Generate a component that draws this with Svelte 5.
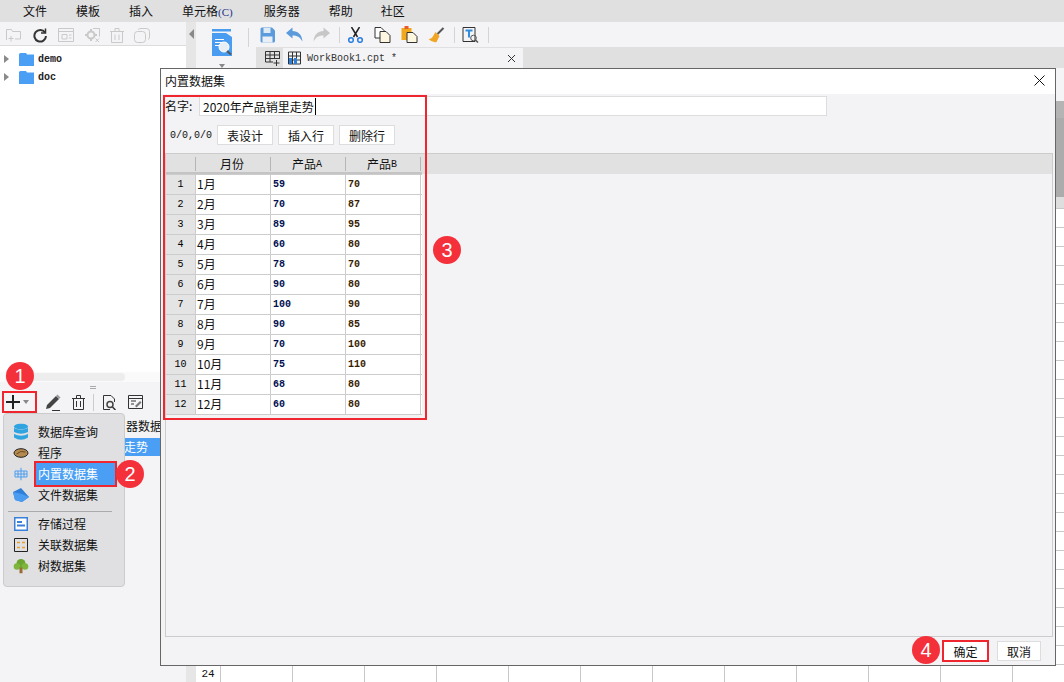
<script>
  const menus = [['文件', 23], ['模板', 29], ['插入', 29], ['单元格', 29], ['服务器', 31], ['帮助', 29], ['社区', 28]];
  const rows = [
    ['1月', 59, 70], ['2月', 70, 87], ['3月', 89, 95], ['4月', 60, 80], ['5月', 78, 70], ['6月', 90, 80],
    ['7月', 100, 90], ['8月', 90, 85], ['9月', 70, 100], ['10月', 75, 110], ['11月', 68, 80], ['12月', 60, 80]
  ];
</script>

<div class="app">
  <header class="menubar">
    {#each menus as m}
      <span style="margin-left:{m[1]}px">{m[0]}{#if m[0] === '单元格'}<small class="c">(C)</small>{/if}</span>
    {/each}
  </header>

  <div class="main">
    <aside class="left">
      <div class="ltools">
        <svg width="16" height="14" viewBox="0 0 16 14" fill="none" stroke="#c9c9c9"><path d="M.5 12V1.500h5l1 2h8V11H9M2.500 10.500h5M5 8v5.500" /></svg>
        <svg width="16" height="16" viewBox="0 0 16 16" fill="none" stroke="#333" stroke-width="2"><path d="M13 5.500A5.800 5.800 0 1 0 14 9" /><path d="M13.500 1.500v4.500H9" stroke-width="1.500" /></svg>
        <svg width="16" height="14" viewBox="0 0 16 14" fill="none" stroke="#c9c9c9"><path d="M.5.500h15v13H.5zM.5 3.500h15M4 6.500h5v4.500H4zM11 7h2.500M11 10h2.500" /></svg>
        <svg width="16" height="15" viewBox="0 0 16 15" fill="none" stroke="#c9c9c9"><path d="M7 1v3M7 10v3M1 7h3M10 7h3" stroke-width="2" /><circle cx="7" cy="7" r="3.500" stroke-width="2" /><path d="M11.500 10.500l3.500 3.500M15 10.500L11.500 14" /><path d="M9 .5h6.500v8" /></svg>
        <svg width="14" height="15" viewBox="0 0 14 15" fill="none" stroke="#c9c9c9"><path d="M0 3.500h14M5 3.500V.5h4v3M1.500 3.500v11h11v-11M5 6.500v5.500M9 6.500v5.500" /></svg>
        <svg width="16" height="15" viewBox="0 0 16 15" fill="none" stroke="#c9c9c9"><rect x=".5" y="3.500" width="11" height="11" rx="3" /><path d="M4 1.500Q5 .5 7 .5h5.500Q15.500 .5 15.500 3.500V9Q15.500 11 14 11.500" /></svg>
      </div>
      <div class="tree">
        <div class="node">
          <i class="tri"></i>
          <svg class="folder" width="15" height="13" viewBox="0 0 15 13"><path d="M0 1.500Q0 0 1.500 0H7L8 1.500H15V13H0Z" fill="#4a9ff5" /></svg>
          <span>demo</span>
        </div>
        <div class="node">
          <i class="tri"></i>
          <svg class="folder" width="15" height="13" viewBox="0 0 15 13"><path d="M0 1.500Q0 0 1.500 0H7L8 1.500H15V13H0Z" fill="#4a9ff5" /></svg>
          <span>doc</span>
        </div>
        <div class="hscroll"><b></b></div>
      </div>
      <div class="grip"><i></i></div>
      <div class="ltools2">
        <svg class="plus" width="14" height="14" viewBox="0 0 14 14"><path d="M7 0v14M0 7h14" stroke="#222" stroke-width="2" /></svg>
        <i class="caret"></i>
        <svg class="pen" width="15" height="17" viewBox="0 0 15 17"><path d="M1 11L10 2l3 3-9 9-4 1z" fill="#444" /><path d="M10 2l1.500-1.500 3 3L13 5z" fill="#999" /><path d="M6 16.500h8" stroke="#333" /></svg>
        <svg width="13" height="15" viewBox="0 0 13 15" fill="none" stroke="#333"><path d="M0 3.500h13M4.500 3.500V.5h4v3M1.500 3.500v11h10v-11M4.500 6v6M8.500 6v6" /></svg>
        <u></u>
        <svg width="13" height="15" viewBox="0 0 13 15" fill="none" stroke="#333"><path d="M7 14.500H.5V.5H8L11.500 4v3" /><circle cx="7" cy="9.500" r="3" stroke="#444" stroke-width="1.500" /><path d="M9.500 12L12.500 15" stroke-width="1.500" /></svg>
        <svg class="lastic" width="15" height="14" viewBox="0 0 15 14" fill="none" stroke="#333"><path d="M.5.500h14v13H.5zM.5 3.500h14M3 6h5M3 9h3" /><path d="M7 11l5-5 1.500 1.500-5 5z" fill="#777" stroke="none" /></svg>
      </div>
      <div class="dslist">
        <div class="ds first">器数据</div>
        <div class="ds sel">走势</div>
      </div>
    </aside>

    <div class="split"><i></i></div>

    <section class="work">
      <div class="wtop">
        <div class="tpl">
          <svg width="22" height="29" viewBox="0 0 22 29">
            <path d="M1 0h19v2.500H1z" fill="#4a9cf0" />
            <path d="M1 4h14l6 4v19H1z" fill="#4a9cf0" />
            <path d="M4 10.500h9M4 13.500h7M4 16.500h5" stroke="#fff" />
            <circle cx="13" cy="18" r="5" fill="#e8eef4" stroke="#fff" />
            <path d="M16 22l4 3.500" stroke="#555" stroke-width="2" />
          </svg>
          <i class="caret"></i>
        </div>
        <u class="sepv"></u>
        <div class="workcol">
          <div class="tb">
            <svg width="17" height="16" viewBox="0 0 16 16"><path d="M1 2q0-1.500 1.500-1.500h10L15.500 3.500V14q0 1.500-1.500 1.500H2.500Q1 15.500 1 14z" fill="#5b9bdb" /><path d="M4 1h7v5H4z" fill="#dfeaf5" /><path d="M3 9.500h10v6H3z" fill="#e8eff7" /></svg>
            <svg width="17" height="15" viewBox="0 0 17 14"><path d="M0 5.500L6.500 0v3.500C12 3.500 16 7 16.500 14 14 9.500 11 8 6.500 8v3z" fill="#5b9bdb" /></svg>
            <svg width="17" height="15" viewBox="0 0 17 14"><path d="M17 5.500L10.500 0v3.500C5 3.500 1 7 .5 14 3 9.500 6 8 10.500 8v3z" fill="#c7c7c7" /></svg>
            <u></u>
            <svg width="17" height="16" viewBox="0 0 16 16" fill="none"><path d="M4 0l6 10M12 0L6 10" stroke="#222" stroke-width="1.500" /><circle cx="3.500" cy="13" r="2.300" stroke="#2f7fe0" stroke-width="1.600" /><circle cx="12.500" cy="13" r="2.300" stroke="#2f7fe0" stroke-width="1.600" /></svg>
            <svg width="17" height="16" viewBox="0 0 16 16" fill="#fff" stroke="#333"><path d="M.5.500h6l3 3V11H.5z" /><path d="M5.500 4.500h6l4 4v7h-10z" fill="#fdf6e0" /></svg>
            <svg width="17" height="17" viewBox="0 0 16 17"><path d="M0 2h10v12H0z" fill="#f2a81d" /><path d="M3 0h4v3H3z" fill="#e85b2a" /><path d="M5.500 6.500h6l4 4v6h-10z" fill="#fdf6e0" stroke="#333" /></svg>
            <svg width="17" height="16" viewBox="0 0 16 16"><path d="M15 1L9 7" stroke="#555" stroke-width="2" /><path d="M7 5l4 4-3 6q-4 1-8-3q3 0 4-2z" fill="#f0a524" /></svg>
            <u></u>
            <svg width="17" height="16" viewBox="0 0 16 16" fill="none"><path d="M.5.500h12v14H.5z" stroke="#333" /><path d="M3 3.500h7M6.500 3.500v7" stroke="#2f8de0" stroke-width="2" /><circle cx="11" cy="11" r="2.800" stroke="#555" /><path d="M13 13l2.500 2.500" stroke="#555" stroke-width="1.500" /></svg>
            <u></u>
          </div>
          <div class="tabbar">
            <svg class="addsheet" width="15" height="15" viewBox="0 0 15 15" fill="none" stroke="#333"><path d="M.5 11V.5h14V8M.5 4h14M.5 7.500h14M5 .5V11M9.500.5V8M.5 11H8M11.500 9v6M8.500 12h6" /></svg>
            <div class="tab">
              <svg width="13" height="14" viewBox="0 0 13 14"><path d="M.5 1h12v12H.5zM.5 5h12M.5 9h12M4.500 1v12M8.500 1v12" fill="none" stroke="#333" /><path d="M1 7h3v6H1zM6 7h3v6H6z" fill="#2f7fd8" /></svg>
              <span>WorkBook1.cpt *</span>
              <svg class="x" width="9" height="9" viewBox="0 0 9 9"><path d="M1 1l7 7M8 1L1 8" stroke="#333" /></svg>
            </div>
          </div>
        </div>
      </div>
      <div class="infobar"><div class="vscroll"></div></div>
      <div class="colhead"></div>
      <div class="sheet">
        <div class="rowhead">24</div>
      </div>
    </section>
  </div>

  <div class="popup">
    <div class="mi">
      <svg width="15" height="17" viewBox="0 0 15 17"><ellipse cx="7.500" cy="3" rx="7" ry="3" fill="#2fa4e0" /><path d="M.5 4.500q7 3.500 14 0v4q-7 3.500-14 0zM.5 10.500q7 3.500 14 0v3.500q-7 4.500-14 0z" fill="#2fa4e0" /></svg>
      <span>数据库查询</span>
    </div>
    <div class="mi">
      <svg width="15" height="10" viewBox="0 0 15 10"><ellipse cx="7.500" cy="5" rx="7" ry="4.300" fill="#b58a50" stroke="#222" /><path d="M3 6Q7 2 12 4" stroke="#6b4a20" fill="none" /></svg>
      <span>程序</span>
    </div>
    <div class="mi hl">
      <svg width="14" height="13" viewBox="0 0 14 13" fill="none" stroke="#4a9cf0"><path d="M1 3.500h12v6H1zM1 6.500h12M7 0v13M4 3.500v6M10 3.500v6" /></svg>
      <span>内置数据集</span>
    </div>
    <div class="mi">
      <svg width="16" height="15" viewBox="0 0 16 14"><path d="M0 4L8 0l8 9-7 5-7-2z" fill="#2f7fd8" /><path d="M0 4l9 2 7 3-7 5-7-2z" fill="#4a9cf0" /></svg>
      <span>文件数据集</span>
    </div>
    <hr />
    <div class="mi">
      <svg width="14" height="14" viewBox="0 0 14 14" fill="#fff"><path d="M.75.750h12.500v12.500H.75z" stroke="#3a7fd8" stroke-width="1.500" /><path d="M3 4h5v2H3zM3 7.500h8v2H3z" fill="#3a7fd8" /></svg>
      <span>存储过程</span>
    </div>
    <div class="mi">
      <svg width="14" height="14" viewBox="0 0 14 14" fill="none"><path d="M.5.500h13v13H.5z" stroke="#222" /><path d="M3 4.500h3M8 4.500h3M3 9.500h3M8 9.500h3" stroke="#e8a030" stroke-width="1.500" /></svg>
      <span>关联数据集</span>
    </div>
    <div class="mi">
      <svg width="15" height="15" viewBox="0 0 15 15"><circle cx="7.500" cy="5" r="4.500" fill="#6ba52f" /><circle cx="3.500" cy="8" r="3.300" fill="#7cb63c" /><circle cx="11.500" cy="8" r="3.300" fill="#7cb63c" /><path d="M6 9h3v6H6z" fill="#9a6b32" /></svg>
      <span>树数据集</span>
    </div>
  </div>

  <div class="dialog">
    <div class="dtitle">
      <span>内置数据集</span>
      <svg width="11" height="11" viewBox="0 0 11 11"><path d="M.5.500l10 10M10.500.500l-10 10" stroke="#111" /></svg>
    </div>
    <div class="dbody">
      <div class="namerow">
        <label for="dsname">名字:</label>
        <div class="nameinput" id="dsname">2020年产品销里走势<i></i></div>
      </div>
      <div class="btnrow">
        <span class="coord">0/0, 0/0</span>
        <button>表设计</button>
        <button>插入行</button>
        <button>删除行</button>
      </div>
      <div class="panel">
        <div class="thead">
          <span class="c0"></span>
          <span class="c1">月份</span>
          <span class="c1">产品<em>A</em></span>
          <span class="c1">产品<em>B</em></span>
        </div>
        <div class="tbody">
          {#each rows as r, i}
            <div class="tr">
              <span class="idx">{i + 1}</span>
              <span class="cell m">{r[0]}</span>
              <span class="cell a">{r[1]}</span>
              <span class="cell b">{r[2]}</span>
            </div>
          {/each}
        </div>
      </div>
      <div class="dfoot">
        <button class="ok">确定</button>
        <button>取消</button>
      </div>
    </div>
    <div class="redbox"></div>
  </div>

  <div class="badge b1">1</div>
  <div class="badge b2">2</div>
  <div class="badge b3">3</div>
  <div class="badge b4">4</div>
  <div class="redplus"></div>
</div>

<style>
  :global(body) { margin: 0; }
  .app {
    position: relative; width: 1064px; height: 682px; overflow: hidden;
    display: flex; flex-direction: column; background: #f4f4f6; color: #111;
    font: 12px/1 "Noto Sans CJK SC", "Liberation Sans", sans-serif;
  }
  svg { display: block; flex: none; }
  .menubar { height: 22px; flex: none; background: #e0e0e1; display: flex; align-items: center; font-size: 12px; }
  .menubar small { font: 11px "Liberation Serif", serif; color: #223388; }
  .main { flex: 1; display: flex; min-height: 0; }

  .left { width: 186px; flex: none; display: flex; flex-direction: column; }
  .ltools { height: 24px; flex: none; display: flex; align-items: center; gap: 10px; padding: 3px 0 0 6px; box-sizing: border-box; border-bottom: 1px solid #dcdcdc; }
  .tree { height: 336px; flex: none; background: #fff; padding-top: 4px; box-sizing: border-box; position: relative; }
  .node { height: 18px; display: flex; align-items: center; font: bold 10px "Liberation Mono", monospace; color: #222; }
  .tri { width: 0; height: 0; border-left: 5px solid #8a8a8a; border-top: 4px solid transparent; border-bottom: 4px solid transparent; margin: 0 10px 0 4px; }
  .folder { margin-right: 4px; }
  .hscroll { position: absolute; left: 0; right: 0; bottom: 0; height: 10px; background: #fafafa; }
  .hscroll b { display: block; width: 120px; height: 8px; margin: 1px 0 0 5px; border-radius: 4px; background: #ededed; }
  .grip { height: 10px; flex: none; display: flex; justify-content: center; align-items: center; }
  .grip i { width: 6px; height: 1px; border-top: 1px solid #aaa; border-bottom: 1px solid #aaa; }
  .ltools2 { height: 20px; flex: none; display: flex; align-items: center; padding-left: 6px; }
  .plus { margin-right: 3px; }
  .caret { width: 0; height: 0; border-top: 4px solid #888; border-left: 3px solid transparent; border-right: 3px solid transparent; }
  .pen { margin-left: 17px; margin-right: 11px; }
  .ltools2 u { width: 1px; height: 17px; background: #ccc; margin: 0 9px 0 8px; }
  .lastic { margin-left: 12px; }
  .dslist { flex: 1; padding-top: 8px; }
  .ds { height: 18px; padding-left: 126px; display: flex; align-items: center; overflow: hidden; white-space: nowrap; }
  .ds.first { align-items: flex-start; }
  .ds.sel { background: #4a9ff5; color: #fff; margin-left: 60px; padding-left: 64px; }

  .split { width: 10px; flex: none; background: #e6e6e7; display: flex; padding-top: 7px; align-items: flex-start; justify-content: center; box-sizing: border-box; }
  .split i { width: 0; height: 0; border-right: 5px solid #888; border-top: 5px solid transparent; border-bottom: 5px solid transparent; }

  .work { flex: 1; display: flex; flex-direction: column; min-width: 0; }
  .wtop { height: 46px; flex: none; display: flex; }
  .tpl { width: 52px; flex: none; display: flex; flex-direction: column; align-items: center; padding: 7px 0 0 0; box-sizing: border-box; }
  .tpl .caret { margin: 6px 0 0 0; }
  .sepv { width: 1px; height: 19px; margin-top: 6px; background: #d4d4d4; flex: none; }
  .workcol { flex: 1; display: flex; flex-direction: column; min-width: 0; }
  .tb { height: 25px; flex: none; display: flex; align-items: center; gap: 10px; padding: 0 0 0 10px; box-sizing: border-box; }
  .tb u { width: 1px; height: 16px; background: #d4d4d4; margin: 0 -3px 0 -1px; }
  .tabbar { height: 21px; flex: none; background: #e0e0e1; display: flex; align-items: flex-end; margin-left: 7px; }
  .addsheet { margin: 0 0 2px 9px; }
  .tab { width: 240px; height: 20px; margin-left: 3px; background: #f4f4f6; display: flex; align-items: center; padding-left: 5px; box-sizing: border-box; font: 10px "Liberation Mono", monospace; color: #333; gap: 6px; }
  .tab span { flex: 1; }
  .tab .x { margin-right: 7px; }
  .infobar { height: 129px; flex: none; position: relative; }
  .vscroll { position: absolute; right: 0; top: 33px; width: 8px; height: 96px; background: #acacac; border-top: 17px solid #b4b4b4; box-sizing: border-box; }
  .colhead { height: 11px; flex: none; background: #dedede; }
  .sheet {
    flex: 1; background-color: #fff; position: relative;
    background-image:
      linear-gradient(90deg, #c8c8c8 1px, transparent 1px),
      linear-gradient(#c8c8c8 1px, transparent 1px);
    background-size: 72px 100%, 100% 19px;
    background-position: 24px 0, 0 0;
  }
  .rowhead { position: absolute; left: 0; bottom: 0; width: 24px; height: 17px; background: #fff; box-sizing: border-box; display: flex; align-items: center; justify-content: center; font: 11px "Liberation Mono", monospace; color: #111; }

  .popup {
    position: absolute; left: 3px; top: 413px; width: 122px; height: 174px; box-sizing: border-box;
    background: #e0e0e2; border: 1px solid #cbcbcb; border-radius: 4px; padding-top: 7px;
  }
  .mi { height: 21px; display: flex; align-items: center; position: relative; font-size: 12px; color: #111; padding-left: 9px; }
  .mi svg { width: 16px; position: absolute; left: 9px; top: 50%; transform: translateY(-50%); }
  .mi span { margin-left: 25px; }
  .mi.hl span { background: #4a9ff5; color: #fff; outline: 2px solid #f0262e; margin-left: 23px; padding: 5px 17px 5px 2px; width: 60px; }
  .popup hr { border: 0; border-top: 1px solid #aaa; margin: 6px 12px 1px 4px; height: 0; }

  .dialog {
    position: absolute; left: 160px; top: 68px; width: 896px; height: 598px; box-sizing: border-box;
    border: 1px solid #666; background: #f3f3f5; display: flex; flex-direction: column;
  }
  .dtitle { height: 25px; flex: none; background: #fff; display: flex; align-items: center; justify-content: space-between; padding: 0 10px 2px 4px; box-sizing: border-box; font-size: 12px; }
  .dbody { flex: 1; display: flex; flex-direction: column; padding: 2px 3px 0 4px; min-height: 0; }
  .namerow { display: flex; align-items: center; height: 20px; flex: none; }
  .namerow label { width: 34px; font-size: 12px; }
  .nameinput { width: 628px; height: 20px; box-sizing: border-box; background: #fff; border: 1px solid #ddd; padding-left: 3px; display: flex; align-items: center; font: 12px "Noto Sans CJK SC", sans-serif; }
  .nameinput i { width: 1px; height: 17px; background: #000; margin-left: 1px; }
  .btnrow { height: 20px; margin-top: 9px; flex: none; display: flex; align-items: center; gap: 5px; padding-left: 5px; }
  .coord { font: 10px "Liberation Mono", monospace; word-spacing: -6px; width: 42px; white-space: nowrap; color: #111; }
  button { height: 20px; width: 56px; box-sizing: border-box; padding: 0; background: #fff; border: 1px solid #ddd; font: 12px "Noto Sans CJK SC", sans-serif; color: #111; }
  .panel { flex: none; height: 484px; margin-top: 8px; box-sizing: border-box; border: 1px solid #ccc; width: 888px; }
  .thead { display: flex; height: 20px; background: #e1e1e1; align-items: center; }
  .thead span { box-sizing: border-box; height: 14px; display: flex; align-items: center; justify-content: center; border-right: 1px solid #b5b5b5; font-size: 12px; padding-right: 2px; }
  .thead em { font: 10px "Liberation Mono", monospace; }
  .c0 { width: 30px; }
  .c1 { width: 75px; }
  .tbody { width: 256px; box-shadow: 0 -2px 0 #c4c4c4; }
  .tr { display: flex; height: 20px; box-sizing: border-box; border-bottom: 1px solid #ccc; background: #fff; }
  .tr:first-child { height: 21px; border-top: 1px solid #ccc; }
  .idx { width: 30px; flex: none; background: #e4e4e4; display: flex; align-items: center; justify-content: center; font: 10px "Liberation Mono", monospace; box-sizing: border-box; border-right: 1px solid #ccc; color: #000; }
  .cell { width: 75px; flex: none; box-sizing: border-box; border-right: 1px solid #ccc; padding-left: 2px; display: flex; align-items: center; font: 10px "Liberation Mono", monospace; }
  .cell.m { font: 12px "Noto Sans CJK SC", sans-serif; padding: 0 0 2px 1px; }
  .cell.a { color: #001050; font-weight: bold; }
  .cell.b { color: #3a1c00; font-weight: bold; }
  .dfoot { flex: 1; display: flex; justify-content: flex-end; align-items: center; gap: 9px; padding-right: 11px; }
  .dfoot button { width: 44px; }
  .dfoot .ok { width: 45px; outline: 2px solid #f0262e; outline-offset: -1px; }

  .redbox { position: absolute; left: 2px; top: 26px; width: 260px; height: 321px; border: 2px solid #f0262e; pointer-events: none; }
  .redplus { position: absolute; left: 2px; top: 391px; width: 31px; height: 18px; border: 2px solid #f0262e; }
  .badge { position: absolute; width: 28px; height: 28px; border-radius: 50%; background: #f4303a; color: #fff; display: flex; align-items: center; justify-content: center; font: 20px "Liberation Sans", sans-serif; }
  .b1 { left: 6px; top: 362px; }
  .b2 { left: 116px; top: 460px; }
  .b3 { left: 433px; top: 236px; }
  .b4 { left: 912px; top: 636px; }
</style>
